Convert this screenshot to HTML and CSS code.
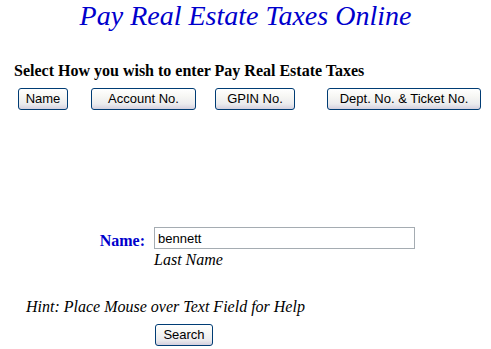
FILE: index.html
```html
<!DOCTYPE html>
<html>
<head>
<meta charset="utf-8">
<title>Pay Real Estate Taxes Online</title>
<link rel="stylesheet" href="styles.css">
</head>
<body>
<h1 class="title">Pay Real Estate Taxes Online</h1>
<h2 class="heading">Select How you wish to enter Pay Real Estate Taxes</h2>
<div class="choices">
  <button class="btn btn-name">Name</button>
  <button class="btn btn-account">Account No.</button>
  <button class="btn btn-gpin">GPIN No.</button>
  <button class="btn btn-dept">Dept. No. &amp; Ticket No.</button>
</div>
<form class="search-form">
  <div class="field-row">
    <label class="field-label" for="lname">Name:</label>
    <input class="field-input" id="lname" type="text" value="bennett">
  </div>
  <div class="field-help">Last Name</div>
  <div class="hint">Hint: Place Mouse over Text Field for Help</div>
  <div class="submit-row">
    <button class="btn btn-search" type="button">Search</button>
  </div>
</form>
</body>
</html>
```

FILE: styles.css
```css
html, body {
  margin: 0;
  padding: 0;
  background: #ffffff;
}
body {
  width: 491px;
  font-family: "Liberation Serif", "Times New Roman", serif;
  color: #000;
}
.title {
  margin: 0;
  text-align: center;
  font-family: "Liberation Serif", "Times New Roman", serif;
  font-size: 28px;
  line-height: 32px;
  font-weight: normal;
  font-style: italic;
  color: #0000cc;
}
.heading {
  margin: 30px 0 0 14px;
  font-family: "Liberation Serif", "Times New Roman", serif;
  font-size: 16px;
  line-height: 18px;
  font-weight: bold;
}
.choices {
  display: flex;
  align-items: flex-start;
  margin-top: 8px;
  padding-left: 18px;
}
.btn {
  box-sizing: border-box;
  flex: none;
  height: 22px;
  margin: 0;
  padding: 0 4px;
  border: 1px solid #003c74;
  border-radius: 3px;
  background: linear-gradient(#ffffff 0%, #f6f6f3 40%, #ebebee 75%, #d4d0de 100%);
  font-family: "Liberation Sans", Arial, sans-serif;
  font-size: 13px;
  line-height: 20px;
  color: #000;
  white-space: nowrap;
  text-align: center;
}
.btn-name { width: 50px; }
.btn-account { width: 105px; margin-left: 23px; }
.btn-gpin { width: 80px; margin-left: 19px; }
.btn-dept { width: 154px; margin-left: 32px; }
.search-form {
  margin: 117px 0 0 0;
}
.field-row {
  display: grid;
  grid-template-columns: 145px 261px;
  column-gap: 9px;
  align-items: end;
}
.field-label {
  text-align: right;
  font-weight: bold;
  font-size: 16px;
  line-height: 18px;
  color: #0000cc;
  position: relative;
  top: 1px;
}
.field-input {
  box-sizing: border-box;
  height: 22px;
  margin: 0;
  padding: 0 3px;
  border: 1px solid #a5acb2;
  font-family: "Liberation Sans", Arial, sans-serif;
  font-size: 13px;
  color: #000;
}
.field-help {
  margin: 2px 0 0 154px;
  font-style: italic;
  font-size: 16px;
  line-height: 18px;
}
.hint {
  margin: 29px 0 0 26px;
  font-style: italic;
  font-size: 16px;
  line-height: 18px;
}
.submit-row {
  margin: 8px 0 0 155px;
}
.btn-search {
  width: 58px;
}
```
